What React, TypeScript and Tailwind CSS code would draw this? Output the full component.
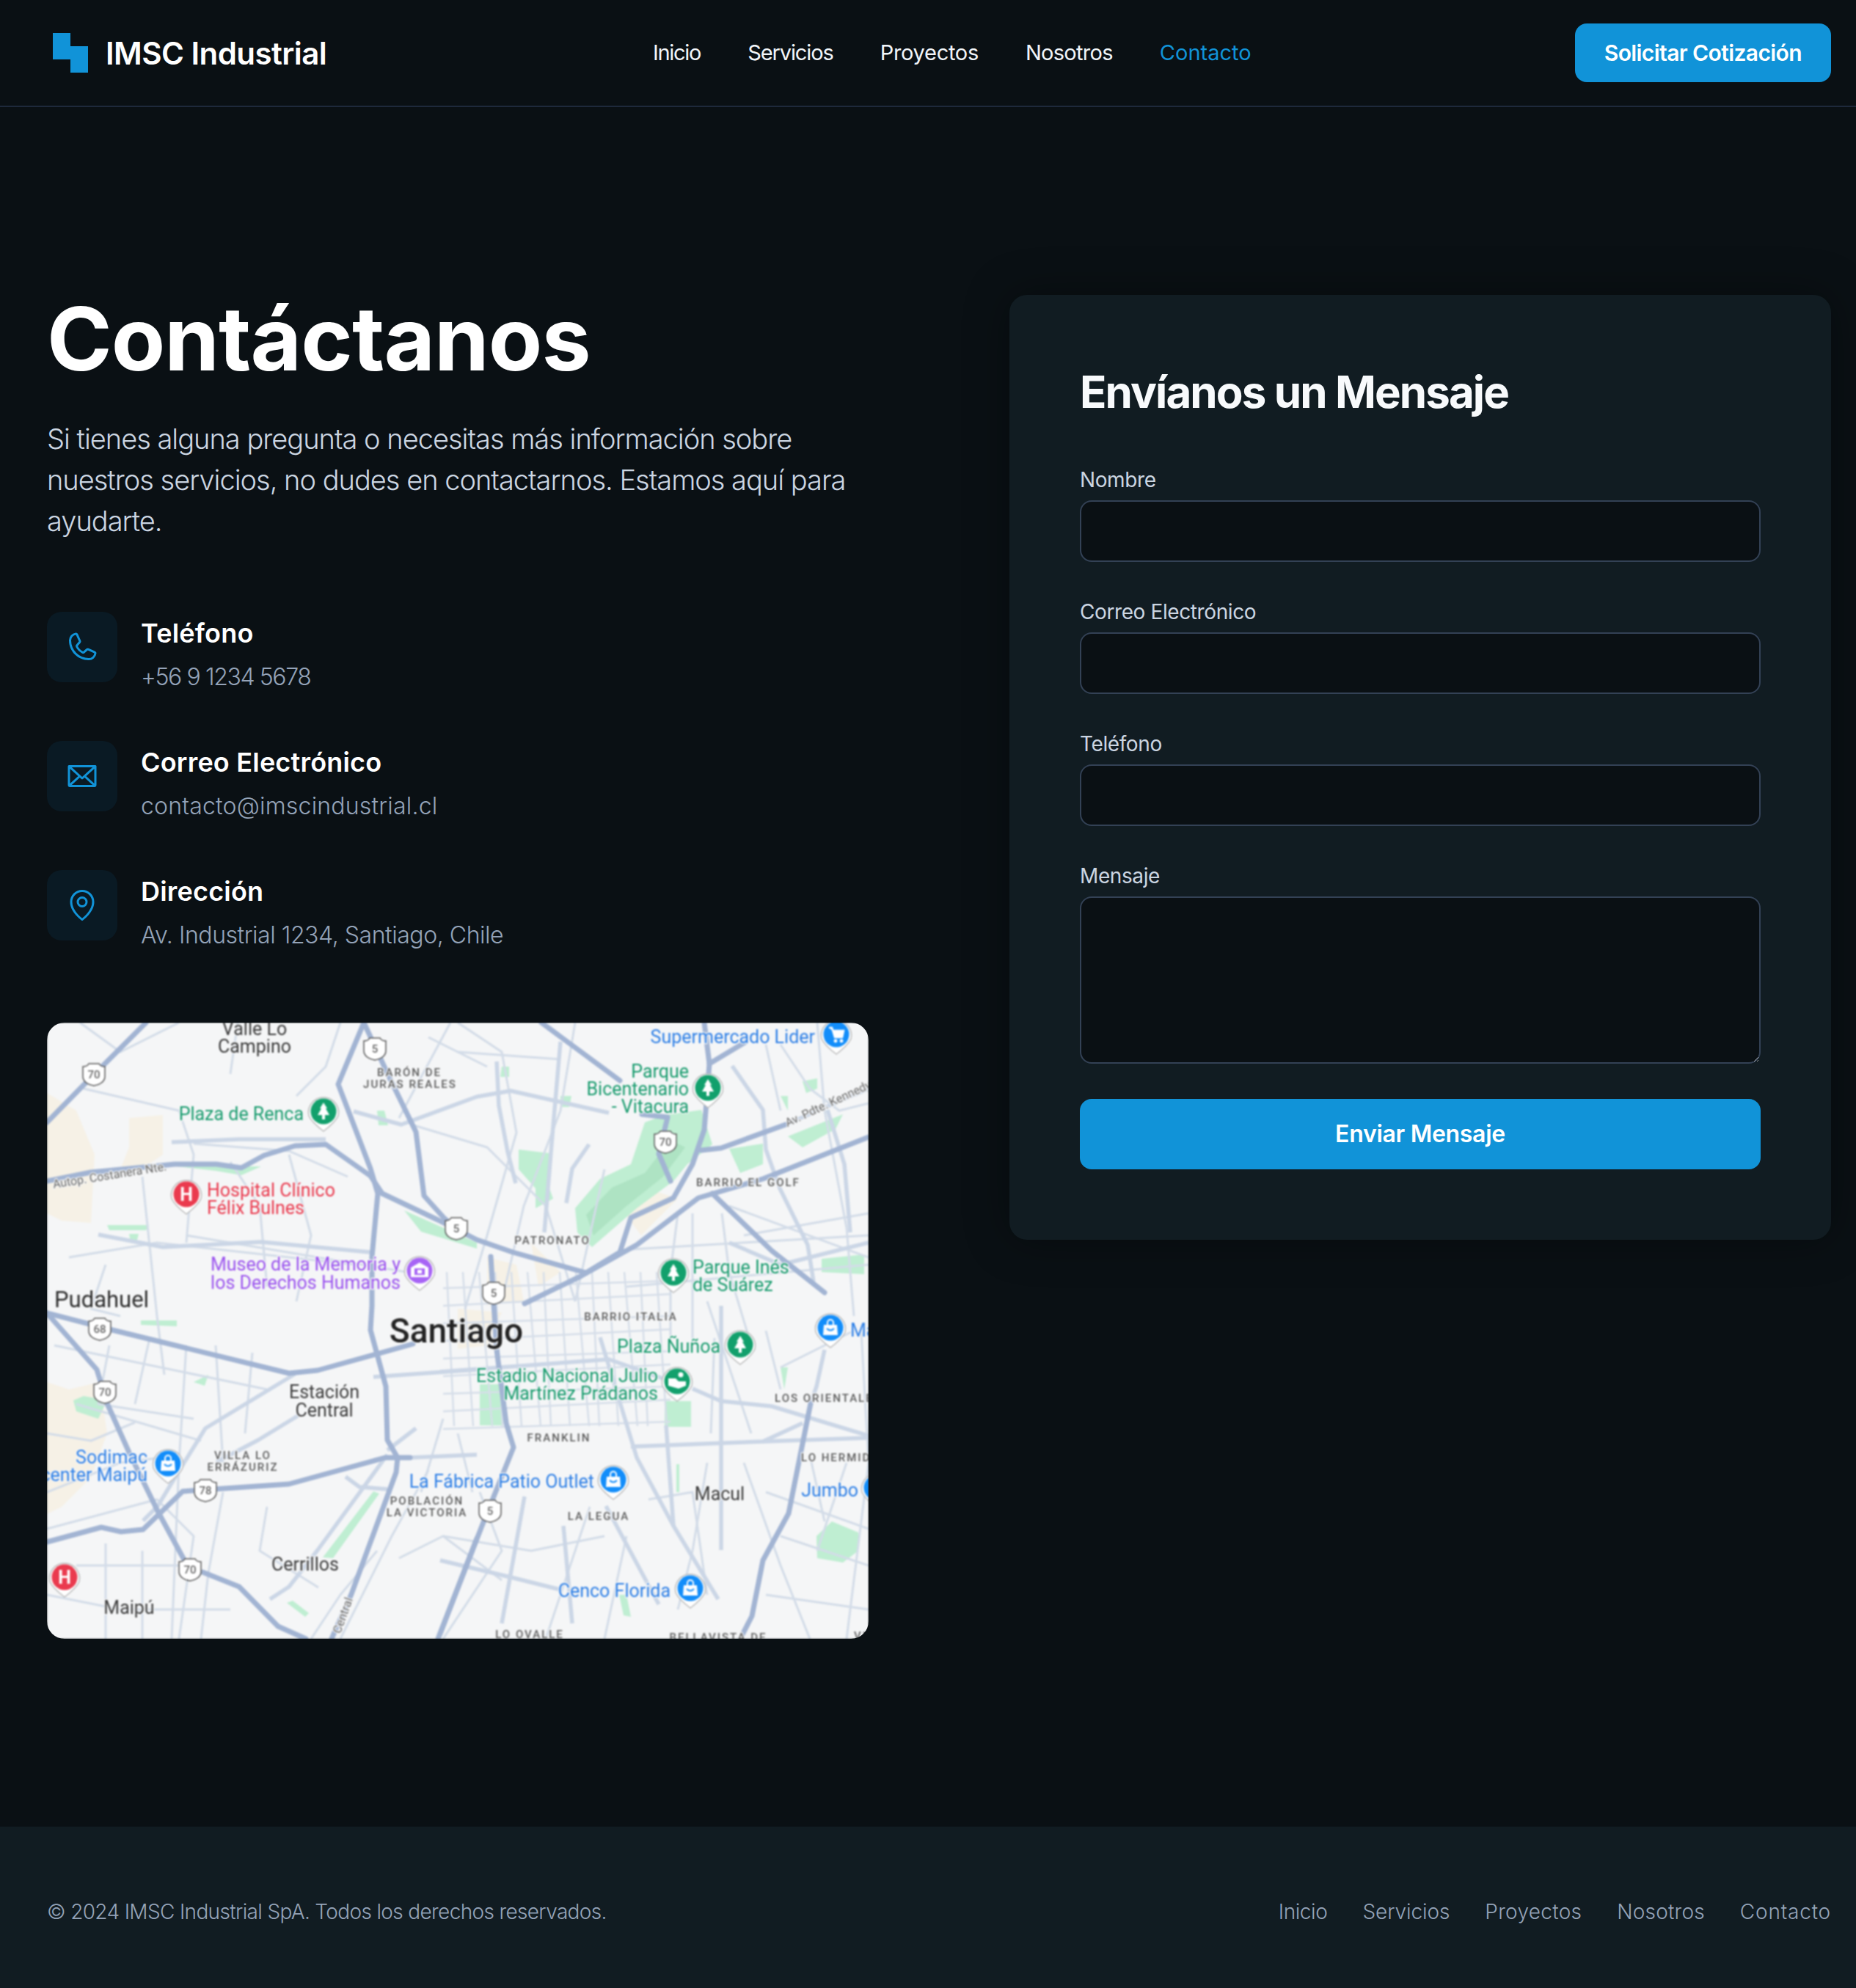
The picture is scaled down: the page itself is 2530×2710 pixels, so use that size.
import React from "react";
import { PiPhone, PiEnvelope, PiMapPin } from "react-icons/pi";

const major: string[] = [
  "135,0 49,86 0,136",
  "432,0 397,84 441,199 451,233 443,319 443,386 441,419 462,496 464,569 478,593 476,613 415,779 388,840",
  "432,0 464,69 503,149 514,236 541,266 558,281",
  "0,216 60,204 174,193 231,193 265,198 296,181 338,168 380,166 441,209 457,233 533,269 586,296 635,313 735,341 781,313 796,266 854,239 880,193 896,146 903,56 896,0",
  "651,383 727,346 804,303 888,239 976,213 1120,156",
  "674,0 781,79",
  "811,125 846,129 834,179 850,216",
  "892,174 919,171 1007,139",
  "953,26 903,56",
  "907,233 988,311 1060,368",
  "0,396 89,419 330,478 369,474 499,438",
  "0,396 68,473 82,519 112,586 151,666 189,736",
  "212,749 262,769 315,823 353,840",
  "0,708 74,688 101,694 131,691 185,639 330,629 461,593 495,593",
  "586,703 533,840",
  "605,319 609,383 613,446 626,546 636,579 593,686 536,833",
  "1041,519 1011,669 976,733 961,809 945,840",
];

const medium: string[] = [
  "418,121 483,139 586,101 632,93 766,123",
  "338,479 216,553 185,603 151,659 131,679",
  "342,536 288,569 231,599",
  "445,483 586,473",
  "503,553 464,583",
  "464,589 369,719 330,769 304,786",
  "495,593 586,589",
  "407,619 426,633 464,636",
  "536,476 766,459 842,486",
  "880,499 919,516 988,523 1120,563",
  "796,578 976,571 1030,546",
  "976,571 1120,566",
  "754,429 804,593 854,686 915,786",
  "1060,446 1049,496 1041,519",
  "536,733 632,756 700,773",
  "704,686 716,819",
  "651,646 620,819",
  "762,659 834,793",
  "919,386 919,719",
  "844,549 854,686",
  "934,59 976,119 980,173 999,226 1037,303 1045,353",
  "613,53 616,113 628,176 639,219",
  "700,26 689,153 678,286",
  "739,166 716,199 708,246",
  "1064,119 1087,193 1095,286",
  "70,289 158,306 292,299 441,313",
  "170,163 262,159 380,159",
  "1007,139 1120,90",
  "1120,300 1000,330 930,300",
];

const minor: string[] = [
  "45,0 100,40 180,0",
  "50,90 180,120 200,180 190,300",
  "200,165 330,175 410,210",
  "130,210 150,400 160,480",
  "190,290 520,345",
  "30,320 150,300 420,330",
  "80,330 60,390 100,400",
  "250,190 290,250 300,360",
  "330,180 360,290 340,380",
  "500,140 600,170 680,250 720,380",
  "560,0 620,40 640,150 600,290 570,390",
  "720,0 700,120 650,250 620,380",
  "760,200 720,380",
  "560,40 700,50",
  "480,130 550,0",
  "1000,30 1040,90 1080,120 1120,110",
  "1000,120 980,30",
  "1050,0 1060,120 1090,280 1100,400",
  "930,250 1120,320",
  "950,290 1120,260",
  "920,260 930,340 960,440",
  "880,260 880,440",
  "860,260 850,340 850,440",
  "780,310 1120,290",
  "790,360 1120,330",
  "10,440 300,500",
  "85,440 70,520 200,540",
  "140,430 120,520",
  "190,440 180,600 170,840",
  "230,440 240,600",
  "280,450 270,560",
  "40,520 210,570",
  "0,640 100,600 180,590",
  "0,690 150,650 200,700 180,840",
  "40,740 190,740",
  "0,780 100,800 250,800",
  "80,710 80,840",
  "130,720 130,840",
  "240,640 220,750 210,840",
  "300,660 290,720 370,770",
  "450,720 400,780 360,840",
  "520,610 470,700 400,840",
  "480,730 540,700 620,760",
  "590,640 620,720 540,840",
  "540,700 660,720 760,700",
  "740,660 680,840",
  "820,650 880,640 900,780",
  "900,600 880,720 860,800",
  "1000,700 1120,740",
  "980,640 1120,690",
  "1040,590 1060,680",
  "950,600 1000,740 1040,840",
  "1110,420 1120,600 1090,840",
  "900,380 960,560",
  "910,430 905,560",
  "980,420 1000,500",
  "1000,470 1100,420",
  "540,540 510,640",
  "560,560 580,640",
  "0,560 60,570 120,545",
  "400,0 380,60 340,100",
  "260,0 250,70",
  "520,20 600,60",
  "1090,600 1050,720",
  "790,700 760,840",
  "980,780 1120,800",
];

const gridV: number[] = [545, 567, 589, 611, 633, 655, 677, 699, 721, 743, 765, 787, 809, 831];
const gridH: number[] = [352, 376, 400, 424, 448, 472, 496, 520, 544];

const parks: string[] = [
  "720,253 754,213 796,193 815,136 842,126 892,119 907,166 873,193 854,216 804,253 743,306 723,286",
  "643,173 685,178 685,226 690,240 666,253 666,226 643,200",
  "930,172 976,165 976,193 945,205",
  "1056,322 1114,316 1114,343 1056,340",
  "1010,155 1085,125 1075,145 1030,170",
  "1030,80 1050,76 1050,90 1035,96",
  "842,516 878,516 878,551 842,551",
  "590,493 620,493 620,549 590,549",
  "1049,700 1070,680 1106,695 1106,720 1085,736 1050,730",
  "36,515 50,509 82,515 70,540 40,530",
  "376,729 445,639 453,642 390,730",
  "128,406 177,406 177,414 128,412",
  "327,791 335,788 357,805 352,810",
  "82,276 139,276 135,283 85,283",
  "112,288 125,288 122,300 114,300",
  "177,196 292,196 265,208 230,202",
  "487,256 586,300 586,308 510,285",
  "450,120 460,120 465,140 452,140",
  "620,60 630,60 630,74 618,74",
  "1000,470 1010,470 1005,500",
  "1000,100 1010,100 1010,120",
  "200,490 220,480 215,495",
  "700,100 715,100 712,115 700,115",
  "858,602 862,602 862,640 858,640",
  "780,780 790,780 796,810 786,808",
];

const tans: string[] = [
  "0,96 40,120 65,180 60,273 20,270 0,260",
  "112,130 158,126 158,180 140,192 100,200 112,170",
  "0,490 30,500 72,490 82,560 60,620 20,660 0,670",
  "600,320 640,330 650,380 600,385",
  "560,390 620,395 600,440 560,445",
  "660,300 700,340 670,360",
  "780,250 830,230 860,240 810,290",
];

const shields: [number, number, string][] = [
  [64, 71, "70"], [447, 36, "5"], [558, 281, "5"], [843, 163, "70"], [609, 369, "5"],
  [72, 418, "68"], [79, 504, "70"], [216, 638, "78"], [195, 746, "70"], [604, 666, "5"],
];

function Shield({ x, y, n }: { x: number; y: number; n: string }) {
  return (
    <g>
      <path d={`M${x - 15} ${y - 11} Q${x - 9} ${y - 11} ${x - 7} ${y - 15} H${x + 7} Q${x + 9} ${y - 11} ${x + 15} ${y - 11} V${y + 2} Q${x + 15} ${y + 12} ${x} ${y + 15} Q${x - 15} ${y + 12} ${x - 15} ${y + 2} Z`} fill="#ffffff" stroke="#5a5a5a" strokeWidth={1.5} />
      <text x={x} y={y + 5} textAnchor="middle" fontSize={15} fill="#666666" fontWeight={500}>{n}</text>
    </g>
  );
}

function Pin({ x, y, color, kind }: { x: number; y: number; color: string; kind: "tree" | "bag" | "h" | "cart" | "museum" | "stadium" }) {
  return (
    <g>
      <path d={`M${x - 20} ${y + 6} A20.5 20.5 0 1 1 ${x + 20} ${y + 6} Q${x + 16} ${y + 15} ${x} ${y + 27} Q${x - 16} ${y + 15} ${x - 20} ${y + 6} Z`} fill="#ffffff" stroke="#b9b9b9" strokeWidth={1.5} />
      <circle cx={x} cy={y} r={17.5} fill={color} />
      {kind === "tree" && <path d={`M${x} ${y - 12} L${x + 5} ${y - 4} L${x + 3} ${y - 4} L${x + 8} ${y + 5} L${x + 2} ${y + 5} L${x + 2} ${y + 11} L${x - 2} ${y + 11} L${x - 2} ${y + 5} L${x - 8} ${y + 5} L${x - 3} ${y - 4} L${x - 5} ${y - 4} Z`} fill="#ffffff" />}
      {kind === "bag" && (
        <g>
          <path d={`M${x - 9} ${y - 4} H${x + 9} L${x + 10} ${y + 10} H${x - 10} Z`} fill="#ffffff" />
          <path d={`M${x - 4} ${y - 4} V${y - 7} A4 4 0 0 1 ${x + 4} ${y - 7} V${y - 4}`} fill="none" stroke="#ffffff" strokeWidth={2} />
          <path d={`M${x - 5} ${y + 1} Q${x} ${y + 6} ${x + 5} ${y + 1}`} fill="none" stroke={color} strokeWidth={2} />
        </g>
      )}
      {kind === "h" && <text x={x} y={y + 9} textAnchor="middle" fontSize={25} fontWeight={700} fill="#ffffff">H</text>}
      {kind === "cart" && (
        <g fill="none" stroke="#ffffff" strokeWidth={2.5}>
          <path d={`M${x - 10} ${y - 9} H${x - 6} L${x - 2} ${y + 4} H${x + 8} L${x + 10} ${y - 5} H${x - 5}`} fill="#ffffff" />
          <circle cx={x - 1} cy={y + 9} r={1.2} />
          <circle cx={x + 7} cy={y + 9} r={1.2} />
        </g>
      )}
      {kind === "museum" && (
        <g>
          <path d={`M${x} ${y - 11} L${x + 12} ${y - 4} V${y + 9} H${x - 12} V${y - 4} Z`} fill="#ffffff" />
          <rect x={x - 7} y={y - 3} width={14} height={9} fill={color} />
          <rect x={x - 3} y={y - 1} width={6} height={5} fill="#ffffff" />
        </g>
      )}
      {kind === "stadium" && (
        <g fill="#ffffff">
          <circle cx={x + 5} cy={y - 9} r={3.5} />
          <path d={`M${x - 12} ${y - 4} H${x - 2} L${x + 2} ${y} H${x + 12} V${y + 6} L${x + 2} ${y + 10} L${x - 12} ${y + 6} Z`} />
        </g>
      )}
    </g>
  );
}

function L({ x, y, t, c = "#3c3c3c", s = 26, a = "start", w = 400, sp = 0, r }: { x: number; y: number; t: string; c?: string; s?: number; a?: "start" | "middle" | "end"; w?: number; sp?: number; r?: number }) {
  return (
    <text
      x={x}
      y={y + s * 0.36}
      fontSize={s}
      fill={c}
      textAnchor={a}
      fontWeight={w}
      letterSpacing={sp}
      transform={r !== undefined ? `rotate(${r} ${x} ${y})` : undefined}
      stroke="#f5f6f7"
      strokeWidth={2.5}
      className="[paint-order:stroke]"
    >
      {t}
    </text>
  );
}

const G = "#179b6d";
const B = "#2d7fe6";
const R = "#ea3a4e";
const P = "#9a52ee";
const PB = "#128dfa";
const PG = "#12a06c";
const Hood = "#5b5b5b";

function MapPicture() {
  return (
    <svg viewBox="0 0 1120 840" className="block h-full w-full blur-[0.8px] font-['Roboto',sans-serif]">
      <rect width="1120" height="840" fill="#f5f6f7" />
      {tans.map((p) => <polygon key={p} points={p} fill="#f6f1e6" />)}
      {parks.map((p) => <polygon key={p} points={p} fill="#bfeed2" />)}
      <polygon points="735,262 770,225 815,205 850,160 870,170 840,210 790,250 745,290" fill="#aee3c3" />
      {gridV.map((x, i) => <line key={x} x1={x} y1={340} x2={x + 10 + (i % 3) * 4} y2={550} stroke="#d6dee9" strokeWidth={2.5} />)}
      {gridH.map((y, i) => <line key={y} x1={540} y1={y + 10} x2={850} y2={y - (i % 2) * 6} stroke="#d6dee9" strokeWidth={2.5} />)}
      {minor.map((p) => <polyline key={p} points={p} fill="none" stroke="#d3dce8" strokeWidth={3} strokeLinejoin="round" />)}
      {medium.map((p) => <polyline key={p} points={p} fill="none" stroke="#cbd6e6" strokeWidth={5.5} strokeLinejoin="round" />)}
      {major.map((p) => <polyline key={p} points={p} fill="none" stroke="#a2b4d3" strokeWidth={7} strokeLinejoin="round" strokeLinecap="round" />)}
      {shields.map(([x, y, n]) => <Shield key={`${x}-${y}`} x={x} y={y} n={n} />)}

      <L x={283} y={8} t="Valle Lo" a="middle" s={25} />
      <L x={283} y={32} t="Campino" a="middle" s={25} />
      <L x={494} y={68} t="BARÓN DE" a="middle" s={15} c={Hood} w={500} sp={2} />
      <L x={495} y={84} t="JURAS REALES" a="middle" s={15} c={Hood} w={500} sp={2} />
      <L x={350} y={124} t="Plaza de Renca" a="end" s={25} c={G} />
      <L x={218} y={228} t="Hospital Clínico" s={25} c={R} />
      <L x={218} y={252} t="Félix Bulnes" s={25} c={R} />
      <L x={482} y={329} t="Museo de la Memoria y" a="end" s={25} c={P} />
      <L x={482} y={354} t="los Derechos Humanos" a="end" s={25} c={P} />
      <L x={10} y={377} t="Pudahuel" s={31} c="#2e2e2e" />
      <L x={8} y={220} t="Autop. Costanera Nte." s={16} r={-9} c="#666666" />
      <L x={1047} y={19} t="Supermercado Lider" a="end" s={25} c={B} />
      <L x={875} y={66} t="Parque" a="end" s={25} c={G} />
      <L x={875} y={90} t="Bicentenario" a="end" s={25} c={G} />
      <L x={875} y={114} t="- Vitacura" a="end" s={25} c={G} />
      <L x={1007} y={137} t="Av. Pdte. Kennedy" s={16} r={-25} c="#666666" />
      <L x={885} y={218} t="BARRIO EL GOLF" s={15} c={Hood} w={500} sp={2} />
      <L x={689} y={297} t="PATRONATO" a="middle" s={15} c={Hood} w={500} sp={2} />
      <L x={880} y={333} t="Parque Inés" s={25} c={G} />
      <L x={880} y={357} t="de Suárez" s={25} c={G} />
      <L x={558} y={419} t="Santiago" a="middle" s={46} w={500} c="#222222" />
      <L x={796} y={401} t="BARRIO ITALIA" a="middle" s={15} c={Hood} w={500} sp={2} />
      <L x={918} y={441} t="Plaza Ñuñoa" a="end" s={25} c={G} />
      <L x={1095} y={419} t="Ma" s={25} c={B} />
      <L x={833} y={481} t="Estadio Nacional Julio" a="end" s={25} c={G} />
      <L x={833} y={505} t="Martínez Prádanos" a="end" s={25} c={G} />
      <L x={378} y={503} t="Estación" a="middle" s={25} />
      <L x={378} y={528} t="Central" a="middle" s={25} />
      <L x={992} y={512} t="LOS ORIENTALES" s={15} c={Hood} w={500} sp={2} />
      <L x={698} y={566} t="FRANKLIN" a="middle" s={15} c={Hood} w={500} sp={2} />
      <L x={267} y={590} t="VILLA LO" a="middle" s={15} c={Hood} w={500} sp={2} />
      <L x={267} y={606} t="ERRÁZURIZ" a="middle" s={15} c={Hood} w={500} sp={2} />
      <L x={137} y={592} t="Sodimac" a="end" s={25} c={B} />
      <L x={137} y={616} t="Homecenter Maipú" a="end" s={25} c={B} />
      <L x={1028} y={593} t="LO HERMIDA" s={15} c={Hood} w={500} sp={2} />
      <L x={746} y={625} t="La Fábrica Patio Outlet" a="end" s={25} c={B} />
      <L x={518} y={652} t="POBLACIÓN" a="middle" s={15} c={Hood} w={500} sp={2} />
      <L x={518} y={668} t="LA VICTORIA" a="middle" s={15} c={Hood} w={500} sp={2} />
      <L x={752} y={673} t="LA LEGUA" a="middle" s={15} c={Hood} w={500} sp={2} />
      <L x={917} y={642} t="Macul" a="middle" s={25} />
      <L x={1106} y={637} t="Jumbo" a="end" s={25} c={B} />
      <L x={352} y={738} t="Cerrillos" a="middle" s={25} />
      <L x={112} y={797} t="Maipú" a="middle" s={25} />
      <L x={850} y={774} t="Cenco Florida" a="end" s={25} c={B} />
      <L x={403} y={808} t="Central" a="middle" s={16} r={-70} c="#666666" />
      <L x={658} y={834} t="LO OVALLE" a="middle" s={15} c={Hood} w={500} sp={2} />
      <L x={915} y={838} t="BELLAVISTA DE" a="middle" s={15} c={Hood} w={500} sp={2} />
      <L x={1100} y={836} t="VI" s={15} c={Hood} w={500} sp={2} />

      <Pin x={377} y={121} color={PG} kind="tree" />
      <Pin x={190} y={234} color={R} kind="h" />
      <Pin x={508} y={338} color="#a764f5" kind="museum" />
      <Pin x={1076} y={16} color={PB} kind="cart" />
      <Pin x={901} y={89} color={PG} kind="tree" />
      <Pin x={854} y={341} color={PG} kind="tree" />
      <Pin x={945} y={439} color={PG} kind="tree" />
      <Pin x={1068} y={416} color={PB} kind="bag" />
      <Pin x={859} y={489} color={PG} kind="stadium" />
      <Pin x={165} y={601} color={PB} kind="bag" />
      <Pin x={24} y={756} color={R} kind="h" />
      <Pin x={772} y={623} color={PB} kind="bag" />
      <Pin x={1131} y={634} color={PB} kind="bag" />
      <Pin x={877} y={771} color={PB} kind="bag" />
    </svg>
  );
}

function ContactRow({ icon, title, value, track }: { icon: React.ReactNode; title: string; value: string; track: string }) {
  return (
    <div className="flex items-start gap-8">
      <div className="flex h-24 w-24 shrink-0 items-center justify-center rounded-[20px] bg-[#0a1a24] text-[#1193d8]">{icon}</div>
      <div>
        <h3 className="text-[36px] leading-[58px] font-semibold tracking-[0.2px] text-white">{title}</h3>
        <p className={`text-[32px] leading-[62px] font-light text-[#94a3b8] ${track}`}>{value}</p>
      </div>
    </div>
  );
}

function Field({ label, children }: { label: string; children: React.ReactNode }) {
  return (
    <div>
      <label className="mb-2 block text-[28px] leading-[40px] tracking-[-0.4px] text-[#cbd5e1]">{label}</label>
      {children}
    </div>
  );
}

export default function App() {
  const inputClass = "block h-[84px] w-full rounded-2xl border-2 border-[#334155] bg-[#0a1014] px-6 text-white";
  return (
    <div className="flex min-h-[2710px] flex-col bg-[#0a1014] font-['Inter',sans-serif] text-white">
      <header className="flex h-[146px] items-center border-b-2 border-[#1e293b] pr-[34px] pl-16">
        <div className="flex w-[826px] items-center gap-4">
          <svg viewBox="0 0 64 64" className="h-16 w-16 fill-[#1193d8]">
            <path d="M8 5H32V23H56V59H32V41H8Z" />
          </svg>
          <span className="text-[42px] font-semibold tracking-[-0.55px]">IMSC Industrial</span>
        </div>
        <nav className="flex items-center gap-16 text-[29px]">
          <a className="tracking-[-1.3px] text-[#f1f5f9]">Inicio</a>
          <a className="tracking-[-1.1px] text-[#f1f5f9]">Servicios</a>
          <a className="tracking-[-0.3px] text-[#f1f5f9]">Proyectos</a>
          <a className="tracking-[-0.7px] text-[#f1f5f9]">Nosotros</a>
          <a className="tracking-[0px] text-[#1193d8]">Contacto</a>
        </nav>
        <button className="ml-auto flex h-20 items-center rounded-2xl bg-[#1193d8] px-10 text-[30px] font-semibold tracking-[-0.6px] text-white">Solicitar Cotización</button>
      </header>

      <main className="grid flex-1 grid-cols-[1120px_1120px] items-start gap-x-48 pt-64 pb-64 pl-16">
        <section>
          <h1 className="text-[120px] leading-[120px] font-bold tracking-[-1px] text-white">Contáctanos</h1>
          <p className="mt-12 text-[38px] leading-[56px] font-light tracking-[-1px] text-[#cbd5e1]">
            Si tienes alguna pregunta o necesitas más información sobre nuestros servicios, no dudes en contactarnos. Estamos aquí para ayudarte.
          </p>
          <div className="mt-24 flex flex-col gap-14">
            <ContactRow icon={<PiPhone size={48} />} title="Teléfono" value="+56 9 1234 5678" track="tracking-[-1.4px]" />
            <ContactRow icon={<PiEnvelope size={48} />} title="Correo Electrónico" value="contacto@imscindustrial.cl" track="tracking-[0.2px]" />
            <ContactRow icon={<PiMapPin size={48} />} title="Dirección" value="Av. Industrial 1234, Santiago, Chile" track="tracking-[-0.45px]" />
          </div>
          <div className="mt-[88px] h-[840px] w-[1120px] overflow-hidden rounded-3xl">
            <MapPicture />
          </div>
        </section>

        <section className="rounded-3xl bg-[#111c22] p-24 shadow-[0_0_60px_rgba(0,0,0,0.35)]">
          <h2 className="mb-16 text-[60px] leading-[72px] font-bold tracking-[-1.9px] text-[#f8fafc]">Envíanos un Mensaje</h2>
          <form className="flex flex-col gap-12">
            <Field label="Nombre"><input className={inputClass} /></Field>
            <Field label="Correo Electrónico"><input className={inputClass} /></Field>
            <Field label="Teléfono"><input className={inputClass} /></Field>
            <Field label="Mensaje">
              <textarea className="block h-[228px] w-full rounded-2xl border-2 border-[#334155] bg-[#0a1014] px-6 py-4 text-white [color-scheme:dark]" />
            </Field>
            <button type="button" className="h-24 w-full rounded-2xl bg-[#1193d8] text-[32px] font-semibold tracking-[-0.3px] text-white">Enviar Mensaje</button>
          </form>
        </section>
      </main>

      <footer className="flex h-[220px] items-center justify-between bg-[#111c22] pt-3 pr-[34px] pl-16 text-[28px] font-light text-[#94a3b8]">
        <p className="tracking-[-0.65px]">© 2024 IMSC Industrial SpA. Todos los derechos reservados.</p>
        <div className="flex gap-12">
          <a className="tracking-[-0.4px]">Inicio</a>
          <a className="tracking-[-0.1px]">Servicios</a>
          <a className="tracking-[0.3px]">Proyectos</a>
          <a className="tracking-[0.2px]">Nosotros</a>
          <a className="tracking-[0.8px]">Contacto</a>
        </div>
      </footer>
    </div>
  );
}
